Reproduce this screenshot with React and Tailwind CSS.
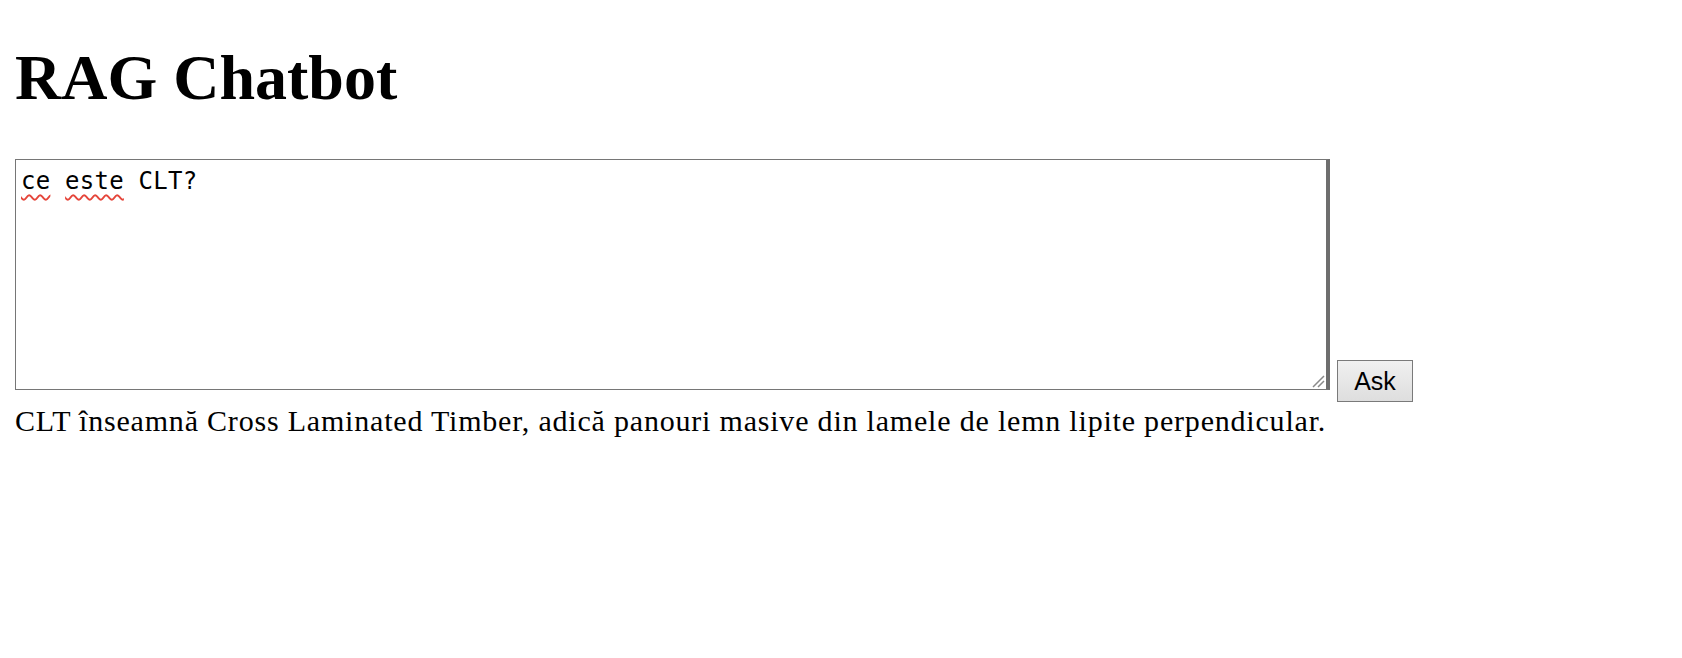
import { useState } from 'react'

function App() {
  const [answer] = useState("CLT înseamnă Cross Laminated Timber, adică panouri masive din lamele de lemn lipite perpendicular.")

  return (
    <div className="min-h-screen bg-white px-[15px] pt-[46px] text-black font-['Liberation_Serif',serif]">
      <h1 className="text-[64px] font-bold leading-none">RAG Chatbot</h1>

      <div className="flex items-start mt-[49px]">
        {/* question box, looks like a plain textarea */}
        <div className="relative w-[1315px] h-[231px] overflow-hidden bg-white border border-[#767676] border-r-4 border-r-[#6e6e6e] pl-[5px] pt-[7px] font-['DejaVu_Sans_Mono',monospace] text-[24px] leading-[28px] tracking-[0.25px]">
          <span className="underline decoration-wavy decoration-[#e5453a] decoration-[2px] underline-offset-[5px]">ce</span>{" "}
          <span className="underline decoration-wavy decoration-[#e5453a] decoration-[2px] underline-offset-[5px]">este</span> CLT?
          <svg className="absolute right-[1px] bottom-[1px]" width="14" height="14" viewBox="0 0 14 14">
            <path d="M13 2 L2 13 M13 7 L7 13" stroke="#8a8a8a" strokeWidth="1.5" fill="none" />
          </svg>
        </div>
        <button className="ml-[7px] mt-[201px] w-[76px] h-[42px] flex items-center justify-center border border-[#7a7a7a] bg-gradient-to-b from-[#f0f0f0] to-[#dedede] font-['Liberation_Sans',Arial,sans-serif] text-[25px] leading-none">
          Ask
        </button>
      </div>

      <p className="mt-[4px] text-[30px] leading-none tracking-[0.8px]">{answer}</p>
    </div>
  )
}

export default App
